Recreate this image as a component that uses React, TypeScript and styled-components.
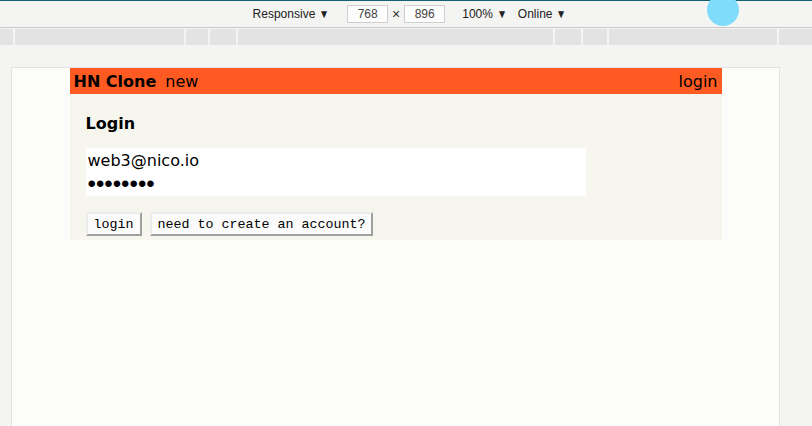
import React from "react";
import styled, { createGlobalStyle } from "styled-components";

const Global = createGlobalStyle`
  html, body { margin: 0; padding: 0; }
  body {
    background: #f4f4f2;
    font-family: "Liberation Sans", Arial, sans-serif;
    overflow: hidden;
  }
`;

const Page = styled.div`
  display: flex;
  flex-direction: column;
  height: 426px;
  position: relative;
  overflow: hidden;
`;

const Toolbar = styled.div`
  height: 26px;
  border-top: 1px solid #10646f;
  border-bottom: 1px solid #c9c9c9;
  display: flex;
  align-items: center;
  justify-content: center;
  padding-left: 8px;
  font-size: 12px;
  color: #222;
`;

const ToolItem = styled.span<{ $gap?: number; $lead?: number }>`
  display: inline-flex;
  align-items: center;
  gap: 3px;
  margin-left: ${(p) => p.$lead ?? 0}px;
  margin-right: ${(p) => p.$gap ?? 0}px;
  white-space: nowrap;
`;

const Arrow = styled.span`
  font-size: 12px;
  line-height: 1;
  transform: scaleX(0.85);
`;

const SizeBox = styled.span`
  box-sizing: border-box;
  width: 41px;
  height: 18px;
  border: 1px solid #cfcfcf;
  background: #fdfdfd;
  display: inline-flex;
  align-items: center;
  justify-content: center;
  color: #444;
  font-size: 12px;
`;

const Times = styled.span`
  width: 16px;
  text-align: center;
  font-size: 14px;
  color: #333;
`;

const Cursor = styled.div`
  position: absolute;
  left: 707px;
  top: -6px;
  width: 32px;
  height: 32px;
  border-radius: 50%;
  background: #7fdcfb;
`;

const Ruler = styled.div`
  margin-top: 1px;
  height: 16px;
  display: flex;
  gap: 2px;
`;

const RulerSeg = styled.div<{ $w?: number }>`
  background: #e3e3e3;
  height: 100%;
  ${(p) => (p.$w ? `width: ${p.$w}px; flex: none;` : `flex: 1;`)}
`;

const Frame = styled.div`
  box-sizing: content-box;
  margin: 22px 0 0 11px;
  width: 767px;
  flex: 1;
  background: #fcfcfa;
  border: 1px solid #e2e2e2;
  border-bottom: none;
`;

const HN = styled.div`
  width: 652px;
  margin: 0 auto;
  font-family: "DejaVu Sans", Verdana, sans-serif;
`;

const Header = styled.div`
  height: 26px;
  background: #ff5a22;
  display: flex;
  align-items: center;
  padding: 0 4px;
  font-size: 16px;
  color: #000;
`;

const Brand = styled.span`
  font-weight: bold;
  margin-right: 9px;
`;

const NavLink = styled.span<{ $right?: boolean }>`
  margin-left: ${(p) => (p.$right ? "auto" : "0")};
`;

const Body = styled.div`
  background: #f6f6ef;
  padding: 20px 16px 4px;
`;

const Title = styled.h2`
  margin: 0 0 15px;
  font-size: 16px;
  line-height: 19px;
  font-weight: bold;
`;

const Fields = styled.div`
  width: 500px;
  background: #fff;
  display: flex;
  flex-direction: column;
`;

const Field = styled.input<{ $secret?: boolean }>`
  box-sizing: border-box;
  height: 24px;
  border: none;
  outline: none;
  background: transparent;
  padding: 0 2px;
  font-family: ${(p) =>
    p.$secret ? `"Liberation Sans", Arial, sans-serif` : `"DejaVu Sans", Verdana, sans-serif`};
  font-size: ${(p) => (p.$secret ? "24px" : "16px")};
  color: #000;
`;

const Actions = styled.div`
  display: flex;
  gap: 8px;
  margin-top: 16px;
`;

const Button = styled.button`
  box-sizing: border-box;
  height: 24px;
  padding: 0 6px;
  font-family: "Liberation Mono", "Courier New", monospace;
  font-size: 13.33px;
  color: #000;
  background: #fbfbfb;
  border-style: solid;
  border-width: 2px;
  border-color: #ececec #a0a0a0 #a0a0a0 #ececec;
  border-radius: 0;
`;

export default function App() {
  return (
    <Page>
      <Global />
      <Toolbar>
        <ToolItem $gap={17}>
          Responsive <Arrow>▼</Arrow>
        </ToolItem>
        <SizeBox>768</SizeBox>
        <Times>×</Times>
        <SizeBox>896</SizeBox>
        <ToolItem $lead={17} $gap={10}>
          100% <Arrow>▼</Arrow>
        </ToolItem>
        <ToolItem>
          Online <Arrow>▼</Arrow>
        </ToolItem>
      </Toolbar>
      <Cursor />
      <Ruler>
        <RulerSeg $w={13} />
        <RulerSeg $w={169} />
        <RulerSeg $w={22} />
        <RulerSeg $w={26} />
        <RulerSeg $w={315} />
        <RulerSeg $w={26} />
        <RulerSeg $w={24} />
        <RulerSeg $w={168} />
        <RulerSeg />
      </Ruler>
      <Frame>
        <HN>
          <Header>
            <Brand>HN Clone</Brand>
            <NavLink>new</NavLink>
            <NavLink $right>login</NavLink>
          </Header>
          <Body>
            <Title>Login</Title>
            <Fields>
              <Field type="text" readOnly defaultValue="web3@nico.io" />
              <Field $secret type="password" readOnly defaultValue="12345678" />
            </Fields>
            <Actions>
              <Button>login</Button>
              <Button>need to create an account?</Button>
            </Actions>
          </Body>
        </HN>
      </Frame>
    </Page>
  );
}
